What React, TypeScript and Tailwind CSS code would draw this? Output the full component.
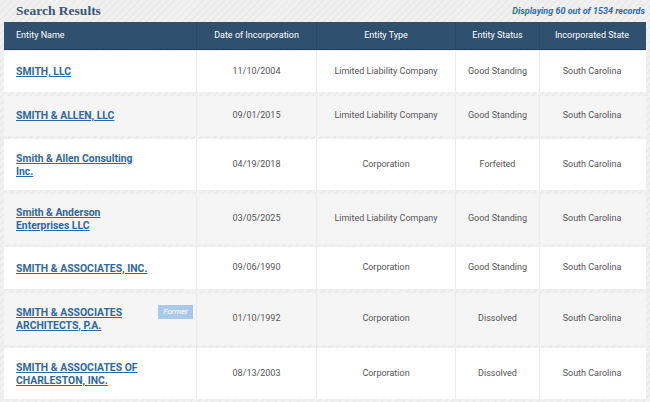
import React from 'react';

type Row = {
  name: string;
  date: string;
  type: string;
  status: string;
  state: string;
  former?: boolean;
  h: string;
};

const rows: Row[] = [
  { name: 'SMITH, LLC', date: '11/10/2004', type: 'Limited Liability Company', status: 'Good Standing', state: 'South Carolina', h: 'h-[41px]' },
  { name: 'SMITH & ALLEN, LLC', date: '09/01/2015', type: 'Limited Liability Company', status: 'Good Standing', state: 'South Carolina', h: 'h-[40px]' },
  { name: 'Smith & Allen Consulting Inc.', date: '04/19/2018', type: 'Corporation', status: 'Forfeited', state: 'South Carolina', h: 'h-[51px]' },
  { name: 'Smith & Anderson Enterprises LLC', date: '03/05/2025', type: 'Limited Liability Company', status: 'Good Standing', state: 'South Carolina', h: 'h-[50px]' },
  { name: 'SMITH & ASSOCIATES, INC.', date: '09/06/1990', type: 'Corporation', status: 'Good Standing', state: 'South Carolina', h: 'h-[42px]' },
  { name: 'SMITH & ASSOCIATES ARCHITECTS, P.A.', date: '01/10/1992', type: 'Corporation', status: 'Dissolved', state: 'South Carolina', former: true, h: 'h-[52px]' },
  { name: 'SMITH & ASSOCIATES OF CHARLESTON, INC.', date: '08/13/2003', type: 'Corporation', status: 'Dissolved', state: 'South Carolina', h: 'h-[51px]' },
];

const cols = 'grid grid-cols-[193px_120px_139px_84px_104px]';

export default function App() {
  return (
    <div
      className="w-[650px] h-[402px] overflow-hidden px-[4px] bg-[repeating-linear-gradient(135deg,#f1f1f1_0px,#f1f1f1_3px,#ebebeb_3px,#ebebeb_5px)]"
      style={{ fontFamily: 'Roboto, "Liberation Sans", sans-serif' }}
    >
      {/* Titre */}
      <div className="h-[22px] flex items-center justify-between pl-[12px] pr-[1px]">
        <h2
          className="text-[13.5px] font-bold text-[#3b5675] leading-none"
          style={{ fontFamily: '"Liberation Serif", serif' }}
        >
          Search Results
        </h2>
        <span className="text-[9px] font-bold italic text-[#2f6dab] mt-[2px]">
          Displaying 60 out of 1534 records
        </span>
      </div>

      {/* Cabeçalho */}
      <div className={`${cols} h-[28px] bg-[#30506f] border-b border-[#22405d] text-white text-[9px]`}>
        <div className="flex items-center pl-[12px] border-r border-[#2a4866]">Entity Name</div>
        <div className="flex items-center justify-center border-r border-[#2a4866]">Date of Incorporation</div>
        <div className="flex items-center justify-center border-r border-[#2a4866]">Entity Type</div>
        <div className="flex items-center justify-center border-r border-[#2a4866]">Entity Status</div>
        <div className="flex items-center justify-center">Incorporated State</div>
      </div>

      {/* Linhas */}
      <div className="flex flex-col gap-[3.5px] mt-[1px]">
        {rows.map((r, i) => (
          <div
            key={r.name}
            className={`${cols} ${r.h} ${i % 2 === 0 ? 'bg-white' : 'bg-[#f5f5f5]'} text-[9px] text-[#555555]`}
          >
            <div className="flex items-center pl-[12px] pr-[3px] border-r border-[#ebebeb]">
              <div className="flex items-start w-full">
                <a
                  href="#"
                  className="max-w-[136px] text-[10.4px] leading-[13px] font-bold text-[#2f68a0] underline underline-offset-[1px]"
                >
                  {r.name}
                </a>
                {r.former && (
                  <span className="ml-auto mt-[-1px] bg-[#a9c9e6] text-white italic text-[8px] leading-[14px] px-[5px]">
                    Former
                  </span>
                )}
              </div>
            </div>
            <div className="flex items-center justify-center border-r border-[#ebebeb]">{r.date}</div>
            <div className="flex items-center justify-center border-r border-[#ebebeb]">{r.type}</div>
            <div className="flex items-center justify-center border-r border-[#ebebeb]">{r.status}</div>
            <div className="flex items-center justify-center">{r.state}</div>
          </div>
        ))}
      </div>
    </div>
  );
}
